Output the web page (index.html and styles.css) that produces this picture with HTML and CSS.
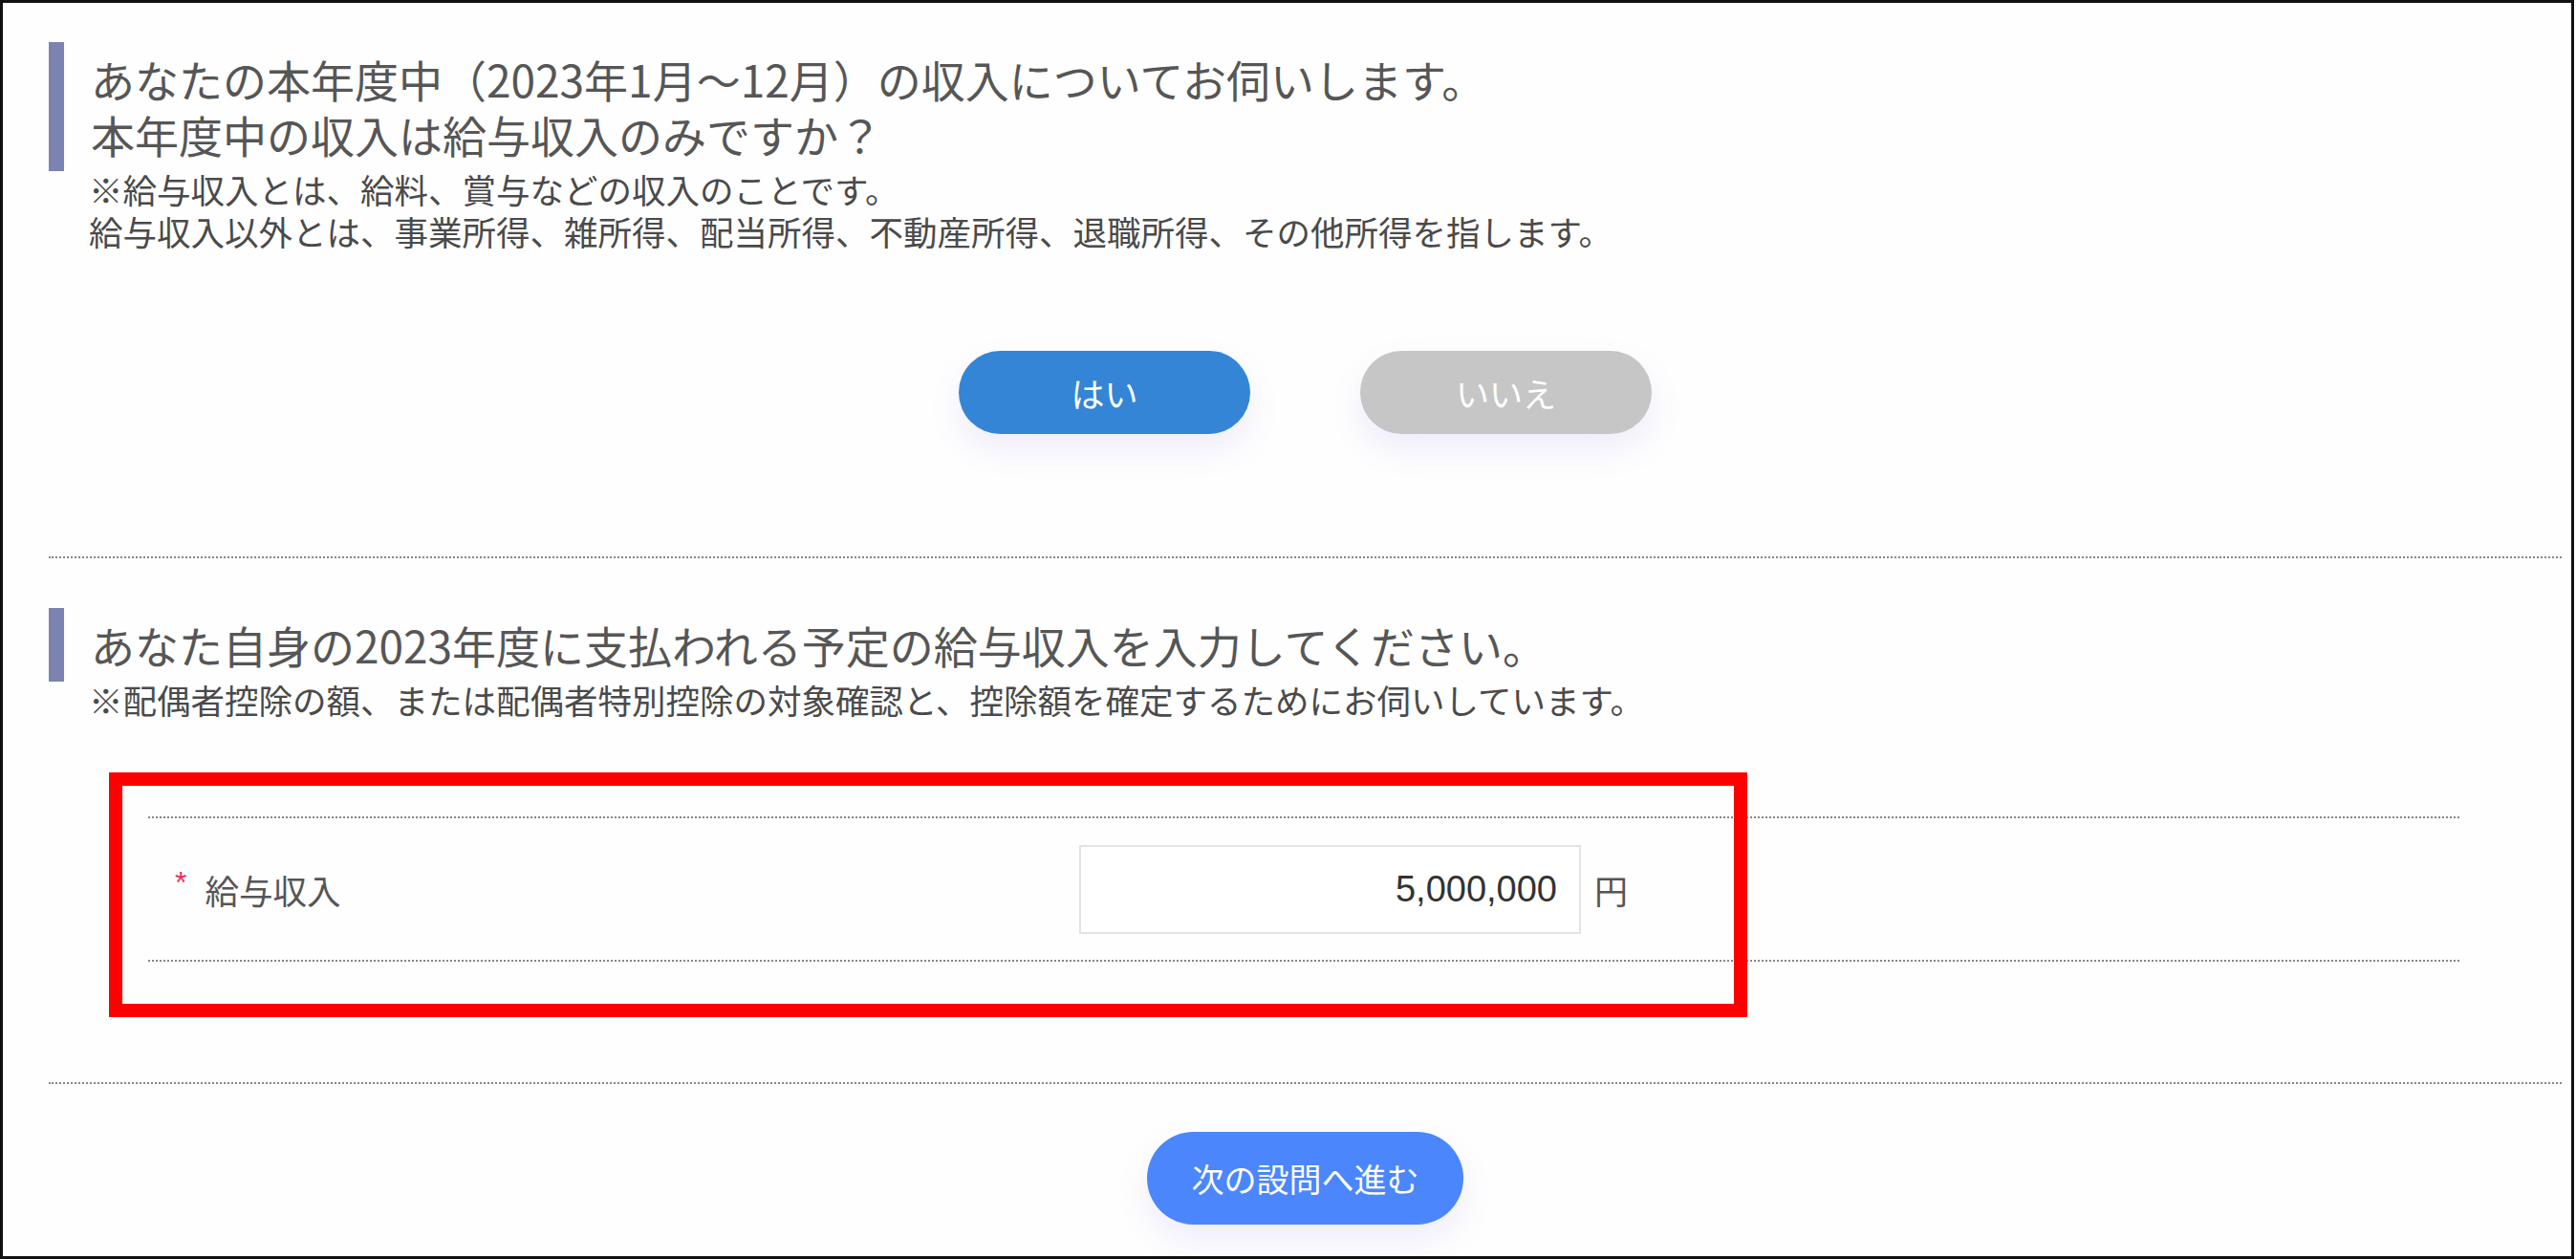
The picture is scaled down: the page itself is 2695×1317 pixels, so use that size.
FILE: index.html
```html
<!DOCTYPE html>
<html lang="ja">
<head>
<meta charset="utf-8">
<title>収入についての設問</title>
<link rel="stylesheet" href="styles.css">
</head>
<body>
<div class="frame">
  <div class="content">
    <section class="question">
      <h2 class="q-title">あなたの本年度中（2023年1月～12月）の収入についてお伺いします。<br>本年度中の収入は給与収入のみですか？</h2>
      <p class="q-note">※給与収入とは、給料、賞与などの収入のことです。<br>給与収入以外とは、事業所得、雑所得、配当所得、不動産所得、退職所得、その他所得を指します。</p>
      <div class="choice-row">
        <button class="pill pill-yes" type="button">はい</button>
        <button class="pill pill-no" type="button">いいえ</button>
      </div>
    </section>
    <hr class="divider divider-first">
    <section class="question">
      <h2 class="q-title">あなた自身の2023年度に支払われる予定の給与収入を入力してください。</h2>
      <p class="q-note">※配偶者控除の額、または配偶者特別控除の対象確認と、控除額を確定するためにお伺いしています。</p>
      <div class="form-table">
        <div class="form-row">
          <div class="form-label"><span class="required">*</span><span class="label-text">給与収入</span></div>
          <div class="form-field">
            <div class="amount-input">5,000,000</div>
            <span class="unit">円</span>
          </div>
        </div>
        <div class="highlight-box"></div>
      </div>
    </section>
    <hr class="divider divider-second">
    <div class="next-row">
      <button class="pill pill-next" type="button">次の設問へ進む</button>
    </div>
  </div>
</div>
</body>
</html>
```
FILE: styles.css
```css
html, body {
  margin: 0;
  padding: 0;
  background: #ffffff;
}

body {
  font-family: "Noto Sans CJK JP", "Noto Sans", "Liberation Sans", sans-serif;
  color: #4f4f4f;
}

.frame {
  width: 2693px;
  height: 1317px;
  box-sizing: border-box;
  border: 3px solid #111111;
  background: #fefefe;
  overflow: hidden;
}

.content {
  padding: 41px 10px 0 48px;
}

.question {
  margin: 0;
}

.q-title {
  margin: 0;
  border-left: 16px solid #7c83b1;
  padding: 9px 0 10px 28px;
  font-size: 46px;
  line-height: 58px;
  font-weight: 400;
  color: #565656;
}

.q-note {
  margin: -3px 0 0 0;
  padding-left: 42px;
  font-size: 35.5px;
  line-height: 44px;
  color: #4a4a4a;
}

.choice-row {
  margin-top: 103px;
  display: flex;
  justify-content: center;
  gap: 115px;
}

.pill {
  border: none;
  border-radius: 50px;
  color: #ffffff;
  font-family: "Noto Sans CJK JP", "Noto Sans", sans-serif;
  font-size: 35px;
  font-weight: 400;
  display: flex;
  align-items: center;
  justify-content: center;
  padding: 0;
  box-shadow: 0 16px 34px rgba(110, 80, 220, 0.10);
}

.pill-yes {
  width: 305px;
  height: 87px;
  background: #3485d5;
}

.pill-no {
  width: 305px;
  height: 87px;
  background: #c6c6c6;
}

.divider {
  margin: 0;
  height: 0;
  border: none;
  border-top: 2px dotted #868686;
}

.divider-first {
  margin-top: 128px;
}

.question + .divider-first + .question .q-title {
  margin-top: 52px;
}

.divider-second {
  margin-top: 126px;
}

.form-table {
  position: relative;
  margin: 100px 107px 0 104px;
  border-top: 2px dotted #868686;
  border-bottom: 2px dotted #868686;
}

.form-row {
  display: grid;
  grid-template-columns: 974px 1fr;
  align-items: center;
  padding: 28px 0 27px 0;
}

.form-label {
  display: flex;
  align-items: center;
  padding-left: 28px;
  font-size: 35.5px;
  color: #555555;
}

.required {
  color: #f0305a;
  font-family: "Liberation Sans", sans-serif;
  font-size: 32px;
  margin-right: 19px;
  position: relative;
  top: -7px;
}

.label-text {
  line-height: 44px;
}

.form-field {
  display: flex;
  align-items: center;
  gap: 14px;
}

.amount-input {
  width: 525px;
  height: 93px;
  box-sizing: border-box;
  border: 2px solid #e3e3e3;
  background: #ffffff;
  display: flex;
  align-items: center;
  justify-content: flex-end;
  padding-right: 23px;
  font-family: "Liberation Sans", Arial, sans-serif;
  font-size: 38px;
  color: #333333;
}

.unit {
  font-size: 35px;
  color: #555555;
}

.highlight-box {
  position: absolute;
  left: -41px;
  top: -48px;
  width: 1714px;
  height: 256px;
  box-sizing: border-box;
  border: 14px solid #ff0000;
  pointer-events: none;
}

.next-row {
  margin-top: 50px;
  display: flex;
  justify-content: center;
}

.pill-next {
  width: 331px;
  height: 97px;
  border-radius: 49px;
  background: #4b86fd;
  font-size: 34px;
}
```
